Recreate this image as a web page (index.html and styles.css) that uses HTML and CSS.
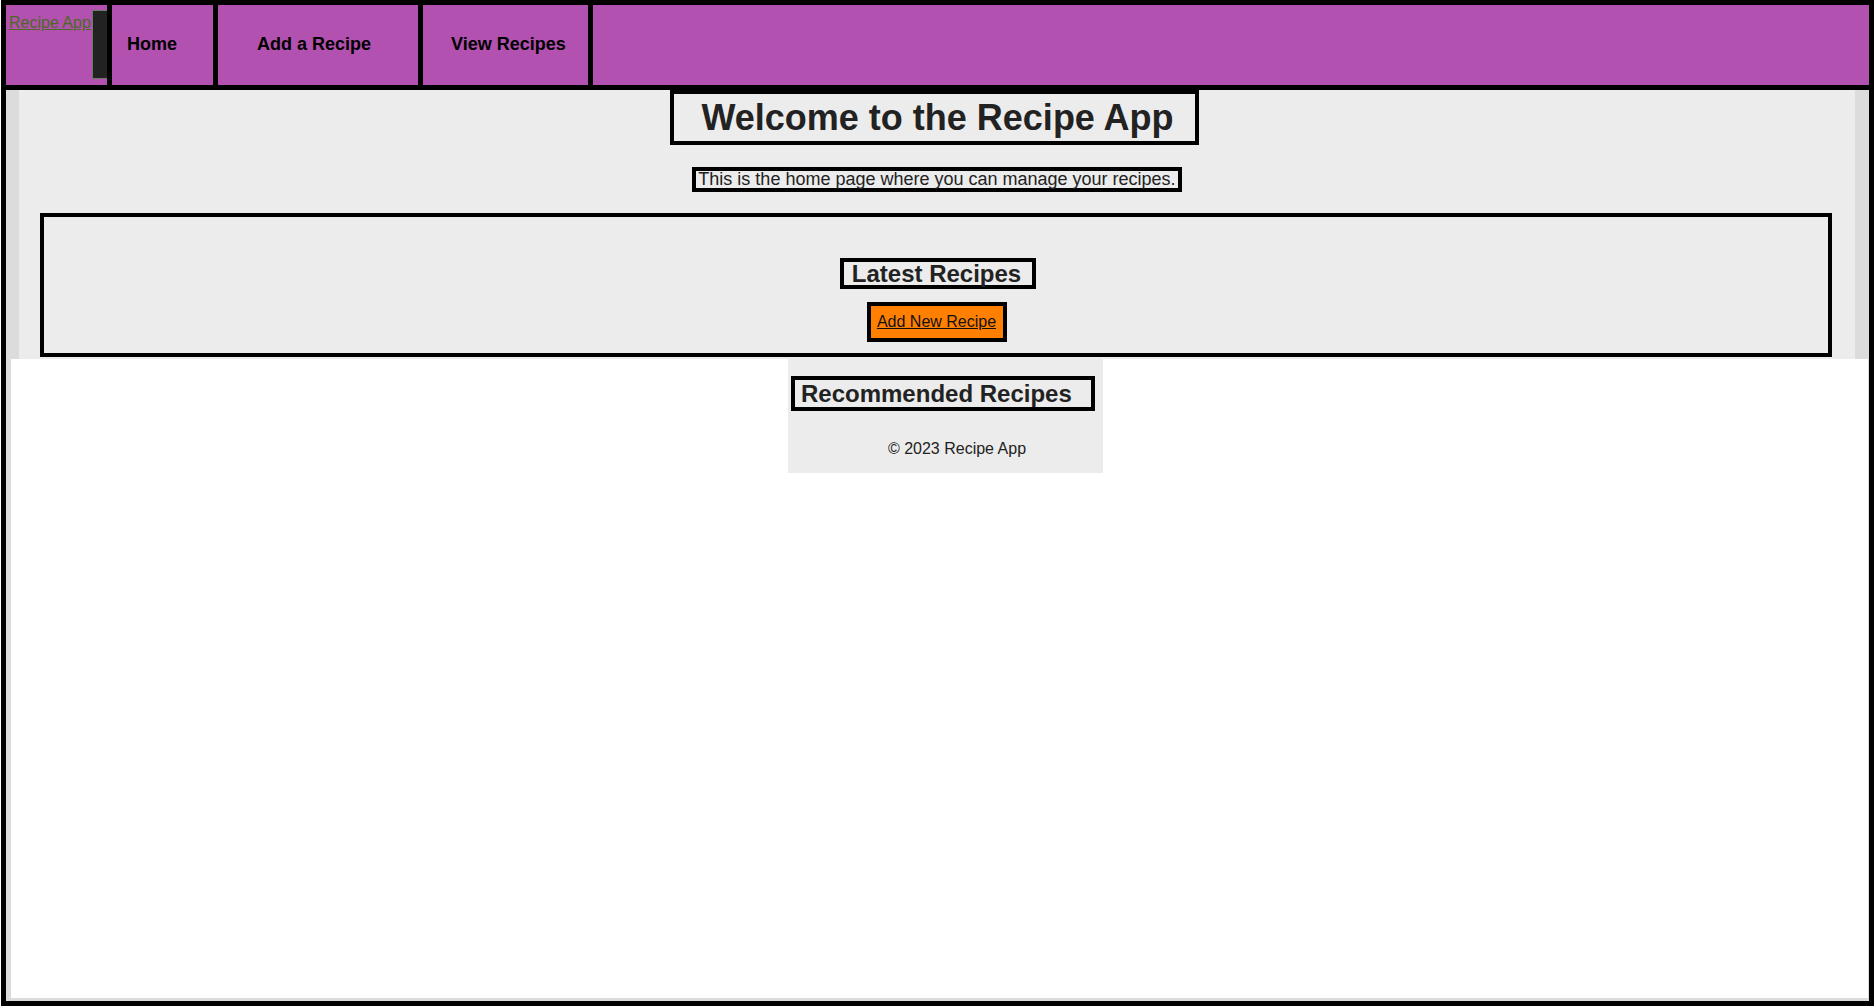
FILE: index.html
```html
<!DOCTYPE html>
<html lang="en">
<head>
<meta charset="utf-8">
<title>Recipe App</title>
<link rel="stylesheet" href="styles.css">
</head>
<body>
<div class="frame">
  <header class="topbar">
    <div class="brand">
      <a href="#" class="brand-link">Recipe App</a>
      <span class="brand-mark"></span>
    </div>
    <nav class="nav">
      <a href="#" class="nav-item nav-home">Home</a>
      <a href="#" class="nav-item nav-add">Add a Recipe</a>
      <a href="#" class="nav-item nav-view">View Recipes</a>
    </nav>
  </header>
  <main class="main">
    <h1 class="title">Welcome to the Recipe App</h1>
    <p class="intro">This is the home page where you can manage your recipes.</p>
    <section class="latest">
      <h2 class="latest-title">Latest Recipes</h2>
      <a href="#" class="add-btn">Add New Recipe</a>
    </section>
  </main>
  <div class="below">
    <section class="recommended">
      <h2 class="rec-title">Recommended Recipes</h2>
      <footer class="footer">© 2023 Recipe App</footer>
    </section>
  </div>
</div>
</body>
</html>
```
FILE: styles.css
```css
html, body {
  margin: 0;
  padding: 0;
  background: #ffffff;
}

body {
  font-family: "Liberation Sans", Arial, Helvetica, sans-serif;
  color: #222222;
}

.frame {
  box-sizing: border-box;
  margin-left: 1px;
  width: 1873px;
  height: 1006px;
  border: 5px solid #000000;
  display: flex;
  flex-direction: column;
  background: #ffffff;
}

/* ---------- header ---------- */
.topbar {
  display: flex;
  height: 80px;
  background: #b351b0;
  border-bottom: 5px solid #000000;
}

.brand {
  position: relative;
  display: flex;
  align-items: flex-start;
  width: 101px;
  padding-left: 3px;
  box-sizing: border-box;
  flex-shrink: 0;
}

.brand-link {
  margin-top: 9px;
  font-size: 16px;
  line-height: 18px;
  color: #4a6a22;
  text-decoration: underline;
  white-space: nowrap;
}

.brand-mark {
  position: absolute;
  top: 5px;
  right: -1px;
  width: 14px;
  height: 67px;
  background: #222222;
  border: 1px solid #6b7b63;
}

.nav {
  display: flex;
  position: relative;
}

.nav-item {
  display: flex;
  align-items: center;
  padding-bottom: 2px;
  border-left: 5px solid #000000;
  font-size: 18px;
  font-weight: bold;
  color: #000000;
  text-decoration: none;
  white-space: nowrap;
}

.nav-home {
  padding-left: 15px;
  padding-right: 36px;
}

.nav-add {
  padding-left: 39px;
  padding-right: 47px;
}

.nav-view {
  padding-left: 28px;
  padding-right: 22px;
  border-right: 5px solid #000000;
}

/* ---------- main ---------- */
.main {
  display: flex;
  flex-direction: column;
  align-items: center;
  background: #ececec;
  border-left: 13px solid #dcdcdc;
  border-right: 14px solid #dcdcdc;
  padding-bottom: 2px;
}

.title {
  margin: 0 5px 0 0;
  padding: 0 21px 0 27px;
  border: 4px solid #000000;
  font-size: 36px;
  line-height: 47px;
  font-weight: bold;
  color: #222222;
  white-space: nowrap;
}

.intro {
  margin: 22px 0 0;
  padding: 0 2px;
  border: 4px solid #000000;
  font-size: 18px;
  line-height: 17px;
  color: #222222;
  white-space: nowrap;
}

.latest {
  align-self: stretch;
  margin: 21px 23px 0 21px;
  border: 4px solid #000000;
  padding: 41px 0 11px;
  display: flex;
  flex-direction: column;
  align-items: center;
}

.latest-title {
  margin: 0 0 0 4px;
  padding: 1px 11px 0 8px;
  border: 4px solid #000000;
  font-size: 24px;
  line-height: 22px;
  font-weight: bold;
  color: #222222;
  white-space: nowrap;
}

.add-btn {
  margin: 13px 0 0 2px;
  padding: 7px 7px 7px 6px;
  background: #ff8000;
  border: 4px solid #000000;
  font-size: 16px;
  line-height: 18px;
  color: #111111;
  text-decoration: underline;
  white-space: nowrap;
}

/* ---------- below ---------- */
.below {
  flex: 1;
  display: flex;
  justify-content: center;
  align-items: flex-start;
  padding-left: 12px;
  border-left: 5px solid #dcdcdc;
  border-right: 1px solid #dcdcdc;
  border-bottom: 3px solid #dcdcdc;
}

.recommended {
  width: 315px;
  background: #ececec;
  padding-top: 17px;
}

.rec-title {
  display: inline-block;
  margin: 0 0 0 3px;
  padding: 0 19px 0 6px;
  border: 4px solid #000000;
  font-size: 24px;
  line-height: 27px;
  font-weight: bold;
  color: #222222;
  white-space: nowrap;
}

.footer {
  margin-top: 29px;
  padding: 0 0 15px 23px;
  text-align: center;
  font-size: 16px;
  line-height: 18px;
  color: #222222;
}
```
